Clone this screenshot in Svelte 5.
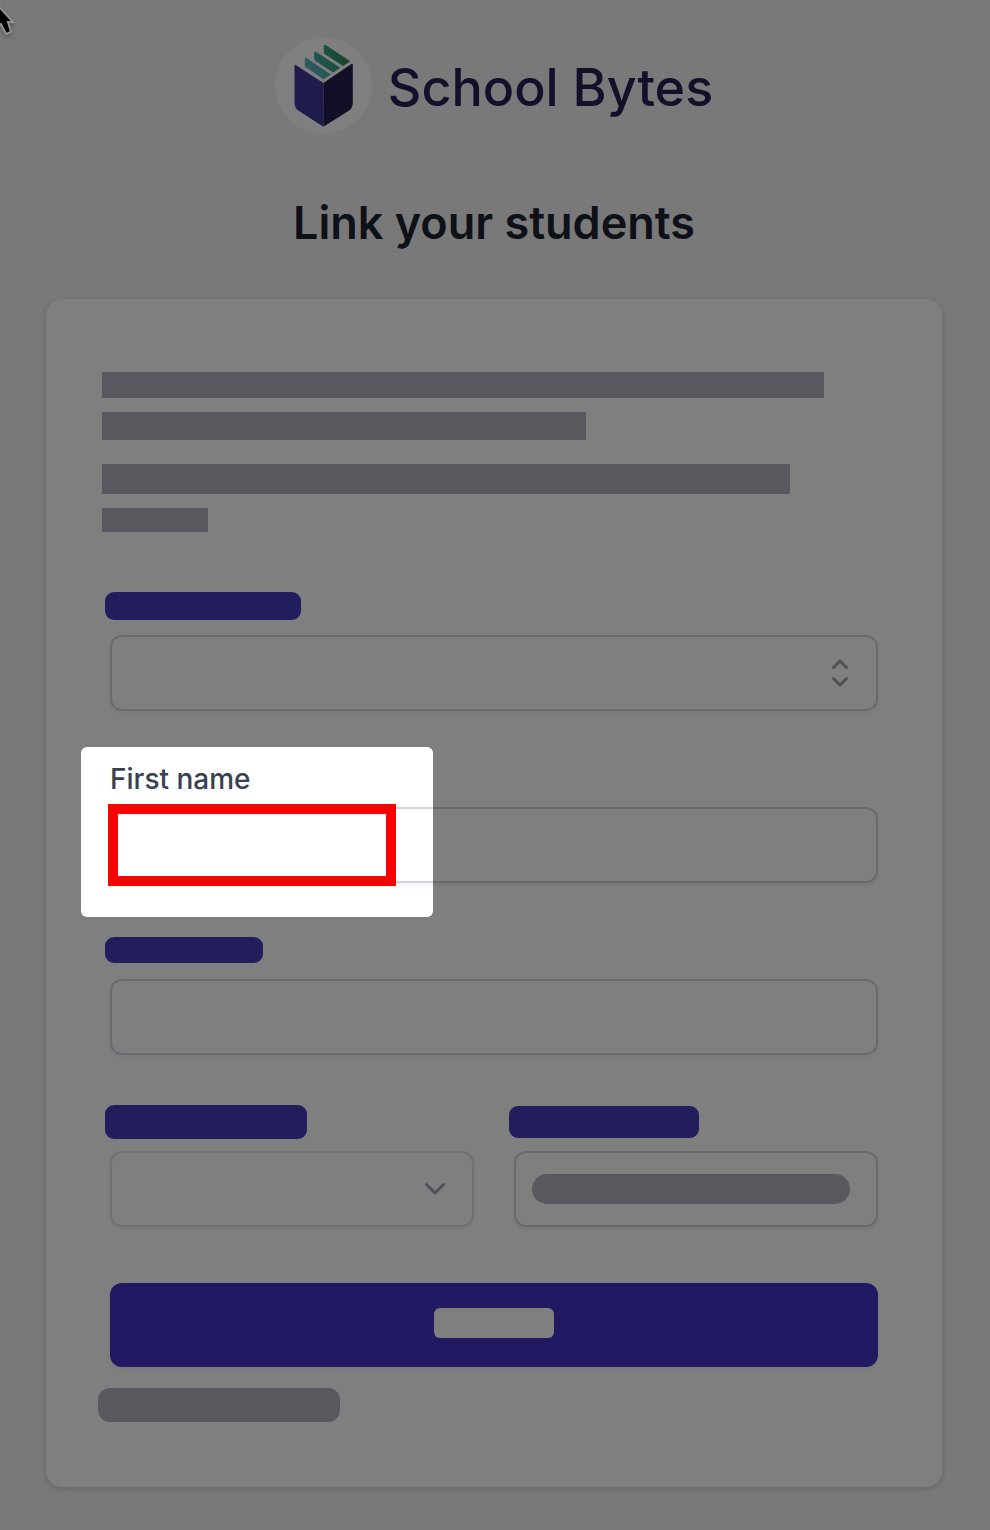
<script lang="ts">
  let school = $state('');
  let firstName = $state('');
  let lastName = $state('');
  let year = $state('');
  let birthDate = $state('');

  function submit(e: SubmitEvent) {
    e.preventDefault();
  }
</script>

<main class="page">
  <header class="brand">
    <svg class="logo" viewBox="0 0 97 97" aria-hidden="true">
      <defs>
        <linearGradient id="page-a" x1="0" x2="1"><stop stop-color="#5cb8c4" /><stop offset="1" stop-color="#4aaeae" /></linearGradient>
        <linearGradient id="page-b" x1="0" x2="1"><stop stop-color="#45aaa4" /><stop offset="1" stop-color="#3a9c80" /></linearGradient>
        <linearGradient id="page-c" x1="0" x2="1"><stop stop-color="#38a080" /><stop offset="1" stop-color="#2e8c50" /></linearGradient>
      </defs>
      <circle cx="48.5" cy="48.5" r="48.5" fill="#fff" />
      <path d="M19.5 29Q19.5 27.2 21 28.2L48.4 46V89.7L24 74Q19.5 71 19.5 66Z" fill="#3e3996" />
      <path d="M48.4 46L76.4 27Q77.8 26.2 77.8 28V66Q77.8 71 73.4 74L48.4 89.7Z" fill="#242050" />
      <path d="M29.8 22Q29.8 20 31.5 21L55.8 37.4L48.6 42.2L31 30.6Q29.8 29.8 29.8 28.5Z" fill="url(#page-a)" />
      <path d="M39.2 15.8Q39.2 13.8 41 14.8L65.2 30.8L58.2 35.5L40.4 24Q39.2 23.2 39.2 22Z" fill="url(#page-b)" />
      <path d="M48.9 9Q48.9 7 50.7 8L75.2 24.2L68 29L50.1 17.2Q48.9 16.4 48.9 15.2Z" fill="url(#page-c)" />
    </svg>
    <span class="brand-name">School Bytes</span>
  </header>

  <h1>Link your students</h1>

  <form class="card" onsubmit={submit}>
    <div class="intro">
      <p><span class="bar line-1"></span><span class="bar line-2"></span></p>
      <p><span class="bar line-3"></span><span class="bar line-4"></span></p>
    </div>

    <div class="field">
      <label for="school"><span class="tag tag-school"></span></label>
      <div class="control">
        <select id="school" bind:value={school}><option value=""></option></select>
        <svg class="icon" viewBox="0 0 40 40" aria-hidden="true">
          <path d="M13.5 14.5L20 8L26.5 14.5M13.5 25.5L20 32L26.5 25.5" />
        </svg>
      </div>
    </div>

    <div class="field">
      <label for="first-name">First name</label>
      <div class="control">
        <input id="first-name" type="text" bind:value={firstName} />
        <span class="highlight"></span>
      </div>
      <span class="spotlight"></span>
    </div>

    <div class="field">
      <label for="last-name"><span class="tag tag-last"></span></label>
      <div class="control">
        <input id="last-name" type="text" bind:value={lastName} />
      </div>
    </div>

    <div class="row">
      <div class="field">
        <label for="year"><span class="tag tag-year"></span></label>
        <div class="control">
          <select id="year" class="light" bind:value={year}><option value=""></option></select>
          <svg class="icon" viewBox="0 0 40 40" aria-hidden="true">
            <path d="M10.5 15.5L19 24L27.5 15.5" />
          </svg>
        </div>
      </div>
      <div class="field">
        <label for="birth-date"><span class="tag tag-birth"></span></label>
        <div class="control">
          <input id="birth-date" type="text" bind:value={birthDate} />
          <span class="value"></span>
        </div>
      </div>
    </div>

    <button type="submit" aria-label="Submit"><span class="button-text"></span></button>
    <div class="note"></div>
  </form>

  <svg class="cursor" viewBox="0 0 24 40" aria-hidden="true">
    <path d="M-8 -1L13 22H8L11 32L6 34L1 24L-8 32Z" />
  </svg>
</main>

<style>
  :global(body) { margin: 0; background: #f3f3f4; }

  .page {
    position: relative;
    box-sizing: border-box;
    min-height: 100vh;
    padding: 37px 48px 43px 46px;
    overflow: hidden;
    background: #f3f3f4;
    font-family: Inter, "Liberation Sans", sans-serif;
  }

  .brand { display: flex; justify-content: center; align-items: flex-end; gap: 16px; }
  .logo { width: 97px; height: 97px; }
  .brand-name { color: #252154; font-size: 52px; font-weight: 500; line-height: 92px; }

  h1 {
    margin: 61px 0 48px;
    color: #1c2430;
    font-size: 45px;
    font-weight: 600;
    line-height: 56px;
    text-align: center;
  }

  .card {
    display: flex;
    flex-direction: column;
    box-sizing: border-box;
    max-width: 896px;
    margin: 0 auto;
    padding: 73px 64px 65px;
    border-radius: 16px;
    background: #fff;
    box-shadow: 0 2px 6px rgba(0, 0, 0, 0.16);
  }

  .intro { display: flex; flex-direction: column; gap: 24px; margin: 0 0 55px -8px; }
  .intro p { display: flex; flex-direction: column; gap: 14px; margin: 0; }
  .bar { max-width: 100%; background: #b0b2bc; }
  .line-1 { width: 722px; height: 26px; }
  .line-2 { width: 484px; height: 28px; }
  .line-3 { width: 688px; height: 30px; }
  .line-4 { width: 106px; height: 24px; }

  .field { position: relative; margin-bottom: 48px; }
  label {
    display: flex;
    align-items: center;
    height: 40px;
    margin-bottom: 8px;
    color: #374151;
    font-size: 28px;
    font-weight: 500;
    line-height: 40px;
  }
  .tag { margin: 0 0 2px -5px; border-radius: 9px; background: #443ab8; }
  .tag-school { width: 196px; height: 28px; }
  .tag-last { width: 158px; height: 26px; }
  .tag-year { width: 202px; height: 34px; }
  .tag-birth { width: 190px; height: 32px; }

  .control { position: relative; }
  input, select {
    display: block;
    box-sizing: border-box;
    width: 100%;
    height: 76px;
    padding: 16px 24px;
    appearance: none;
    border: 2px solid #d1d5db;
    border-radius: 12px;
    outline: none;
    background: #fff;
    box-shadow: 0 2px 4px rgba(0, 0, 0, 0.06);
    color: #374151;
    font: inherit;
    font-size: 28px;
  }
  select.light { border-color: #e0e0e2; }

  .icon {
    position: absolute;
    top: 18px;
    right: 18px;
    width: 40px;
    height: 40px;
    fill: none;
    stroke: #9ca3af;
    stroke-width: 3;
    stroke-linecap: round;
    stroke-linejoin: round;
    pointer-events: none;
  }
  .value {
    position: absolute;
    top: 23px;
    left: 18px;
    right: 28px;
    height: 30px;
    border-radius: 15px;
    background: #b0b2bc;
    pointer-events: none;
  }

  .row { display: grid; grid-template-columns: 1fr 1fr; gap: 40px; margin-bottom: 8px; }

  button {
    display: flex;
    justify-content: center;
    align-items: center;
    height: 84px;
    padding: 0 24px 4px;
    border: 0;
    border-radius: 12px;
    background: #4232c4;
    box-shadow: 0 2px 4px rgba(0, 0, 0, 0.06);
    cursor: pointer;
  }
  .button-text { width: 120px; height: 30px; border-radius: 6px; background: #fff; }
  .note { width: 242px; height: 34px; margin: 21px 0 0 -12px; border-radius: 12px; background: #b0b2bc; }

  /* dims everything on the page except the active field */
  .spotlight {
    position: absolute;
    z-index: 1;
    top: -12px;
    left: -29px;
    width: 352px;
    height: 170px;
    border-radius: 6px;
    box-shadow: 0 0 0 4000px rgba(0, 0, 0, 0.5);
    pointer-events: none;
  }
  .highlight {
    position: absolute;
    z-index: 2;
    top: -3px;
    left: -2px;
    box-sizing: border-box;
    width: 288px;
    height: 82px;
    border: 10px solid #fa0000;
    pointer-events: none;
  }

  .cursor {
    position: absolute;
    z-index: 3;
    top: 0;
    left: 0;
    width: 24px;
    height: 40px;
    fill: #000;
    stroke: #929292;
    stroke-width: 2;
    filter: drop-shadow(0 2px 2px rgba(0, 0, 0, 0.3));
    pointer-events: none;
  }
</style>
